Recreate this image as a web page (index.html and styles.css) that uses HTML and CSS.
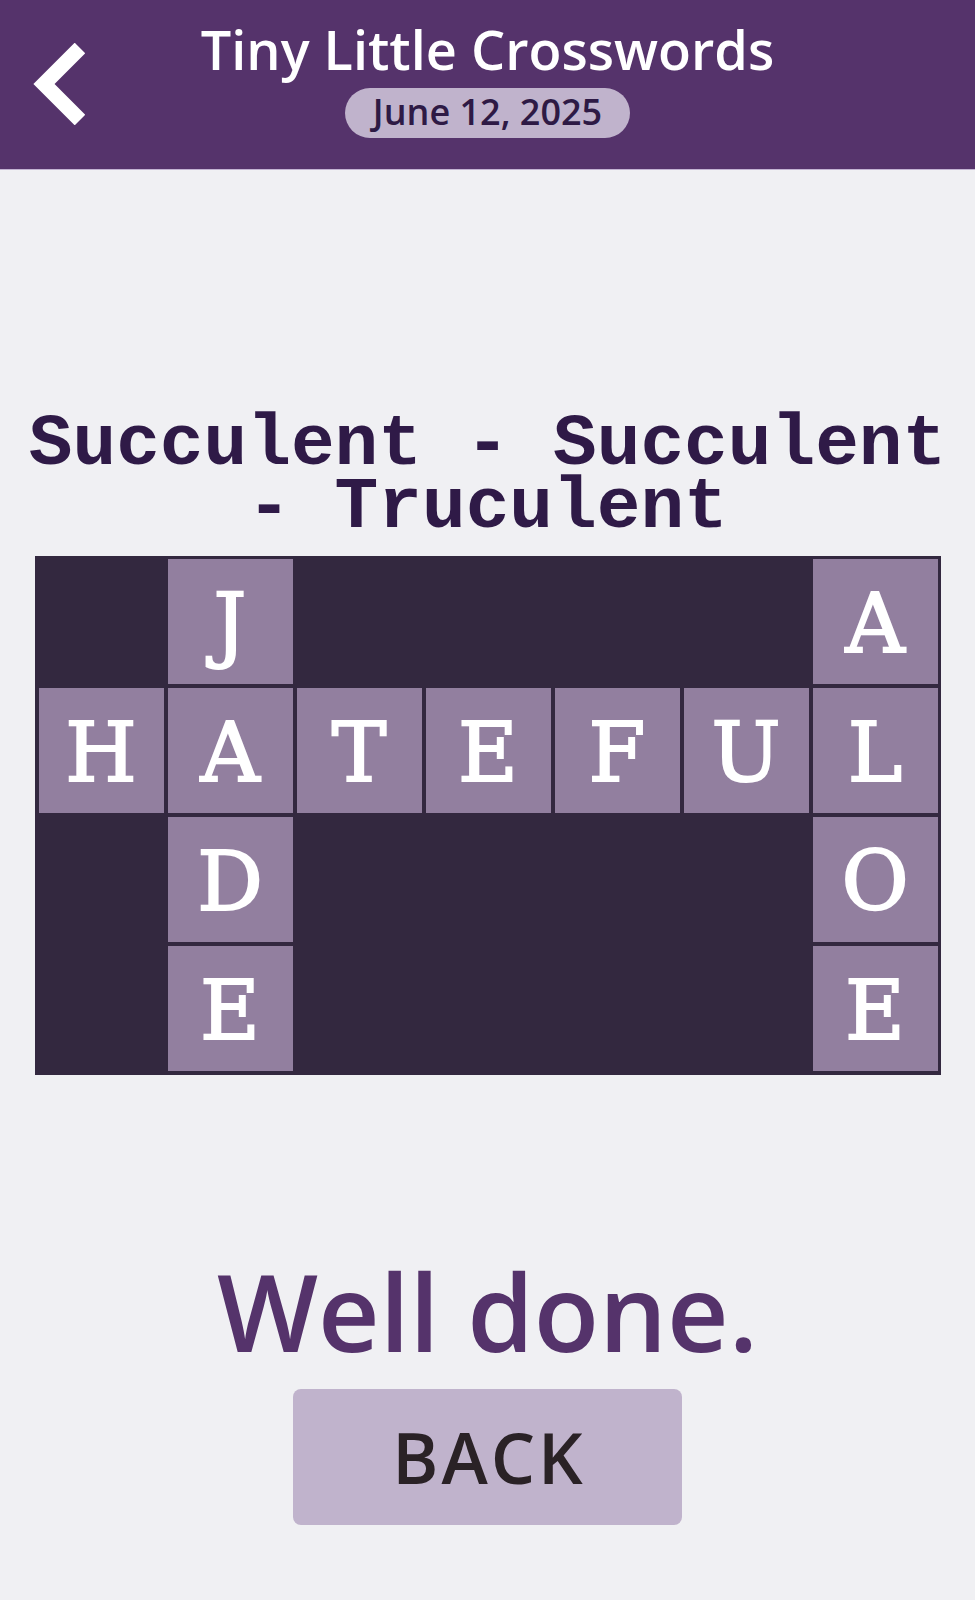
FILE: index.html
```html
<!DOCTYPE html>
<html lang="en">
<head>
    <meta charset="UTF-8">
    <meta name="viewport" content="width=device-width, initial-scale=1.0">
    <title>Tiny Little Crosswords</title>
    <link rel="stylesheet" href="styles.css">
</head>
<body>
    <header class="top-bar">
        <a class="back-link" href="#" aria-label="Back">
            <svg width="52" height="82" viewBox="0 0 52 82">
                <polyline points="47,5 11,41 47,77" fill="none" stroke="#fff" stroke-width="15" stroke-linejoin="miter"/>
            </svg>
        </a>
        <h1 class="app-title">Tiny Little Crosswords</h1>
        <span class="date-pill">June 12, 2025</span>
    </header>
    <main class="puzzle">
        <h2 class="puzzle-title">Succulent - Succulent - Truculent</h2>
        <div class="board">
            <div class="cell"></div>
            <div class="cell filled">J</div>
            <div class="cell"></div>
            <div class="cell"></div>
            <div class="cell"></div>
            <div class="cell"></div>
            <div class="cell filled">A</div>

            <div class="cell filled">H</div>
            <div class="cell filled">A</div>
            <div class="cell filled">T</div>
            <div class="cell filled">E</div>
            <div class="cell filled">F</div>
            <div class="cell filled">U</div>
            <div class="cell filled">L</div>

            <div class="cell"></div>
            <div class="cell filled">D</div>
            <div class="cell"></div>
            <div class="cell"></div>
            <div class="cell"></div>
            <div class="cell"></div>
            <div class="cell filled">O</div>

            <div class="cell"></div>
            <div class="cell filled">E</div>
            <div class="cell"></div>
            <div class="cell"></div>
            <div class="cell"></div>
            <div class="cell"></div>
            <div class="cell filled">E</div>
        </div>
        <p class="result">Well done.</p>
        <button class="back-button" type="button">BACK</button>
    </main>
</body>
</html>
```

FILE: styles.css
```css
body {
    margin: 0;
    background-color: #f0f0f3;
    font-family: "Open Sans", "Noto Sans", sans-serif;
}
.top-bar {
    position: relative;
    display: flex;
    flex-direction: column;
    align-items: center;
    height: 170px;
    box-sizing: border-box;
    padding-top: 22px;
    background-color: #55336b;
    border-bottom: 1px solid #c3b3d3;
}
.back-link {
    position: absolute;
    left: 33px;
    top: 43px;
    display: block;
    line-height: 0;
}
.app-title {
    margin: 0;
    color: #fff;
    font-size: 54px;
    font-weight: 600;
    line-height: 1;
}
.date-pill {
    margin-top: 12px;
    width: 285px;
    height: 50px;
    box-sizing: border-box;
    padding-bottom: 3px;
    border-radius: 25px;
    background-color: #c0b3cc;
    color: #2e1a45;
    font-size: 36px;
    font-weight: 600;
    line-height: 47px;
    text-align: center;
}
.puzzle {
    display: flex;
    flex-direction: column;
    align-items: center;
}
.puzzle-title {
    margin: 243px 0 17px;
    width: 100%;
    color: #2f1a47;
    font-family: "Liberation Mono", monospace;
    font-size: 72.8px;
    font-weight: 700;
    line-height: 63px;
    text-align: center;
}
.board {
    display: grid;
    grid-template-columns: repeat(7, 125px);
    grid-auto-rows: 125px;
    gap: 4px;
    padding: 3px 3px 4px 4px;
    background-color: #33283f;
}
.cell {
    display: flex;
    align-items: center;
    justify-content: center;
    padding-top: 4px;
    box-sizing: border-box;
    color: #fff;
    font-family: "DejaVu Serif", serif;
    font-size: 82px;
    line-height: 1;
    -webkit-text-stroke: 2px #fff;
}
.cell.filled {
    background-color: #927f9f;
}
.result {
    margin: 182px 0 25px;
    color: #55336b;
    font-size: 107px;
    font-weight: 600;
    line-height: 1;
}
.back-button {
    width: 389px;
    height: 136px;
    border: none;
    border-radius: 8px;
    background-color: #c0b3cc;
    color: #2a2226;
    font-family: inherit;
    font-size: 70px;
    font-weight: 600;
    letter-spacing: 3px;
    text-indent: 3px;
}
```
